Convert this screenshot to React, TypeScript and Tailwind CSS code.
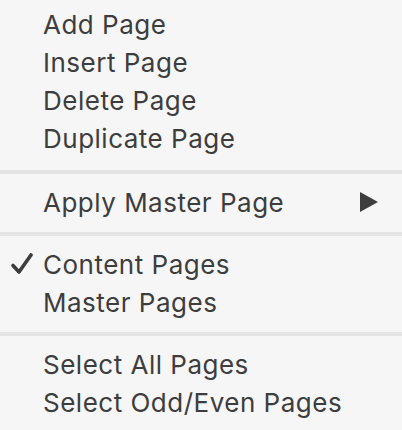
const groups: { label: string; checked?: boolean; submenu?: boolean }[][] = [
  [{ label: 'Add Page' }, { label: 'Insert Page' }, { label: 'Delete Page' }, { label: 'Duplicate Page' }],
  [{ label: 'Apply Master Page', submenu: true }],
  [{ label: 'Content Pages', checked: true }, { label: 'Master Pages' }],
  [{ label: 'Select All Pages' }, { label: 'Select Odd/Even Pages' }],
];

function Check() {
  return (
    <svg className="w-[22px] h-[22px]" viewBox="0 0 22 22" fill="none">
      <path d="M2 12.5 L8 19 L20 2" stroke="#3d3d3d" strokeWidth={3.6} strokeLinecap="round" strokeLinejoin="round" />
    </svg>
  );
}

function Arrow() {
  return (
    <svg className="w-[18px] h-[20px]" viewBox="0 0 18 20">
      <path d="M0 0 L18 10 L0 20 Z" fill="#3d3d3d" />
    </svg>
  );
}

export default function App() {
  return (
    <div className="w-[402px] h-[430px] bg-[#f6f6f6] pt-[5px] overflow-hidden text-[#3d3d3d] text-[26px] tracking-[0.5px] font-['Inter',sans-serif]">
      {groups.map((group, gi) => (
        <div key={gi}>
          {gi > 0 && <div className={`h-[4px] bg-[#e4e4e4] mb-[9px] ${gi === 1 ? 'mt-[13px]' : 'mt-[11px]'}`} />}
          {group.map((item) => (
            <div key={item.label} className="h-[38px] leading-[38px] flex items-center">
              <div className="w-[43px] flex justify-end pr-[10px]">{item.checked && <Check />}</div>
              <span className="flex-1 pt-[2px]">{item.label}</span>
              {item.submenu && (
                <div className="pr-[24px] flex items-center">
                  <Arrow />
                </div>
              )}
            </div>
          ))}
        </div>
      ))}
    </div>
  );
}
